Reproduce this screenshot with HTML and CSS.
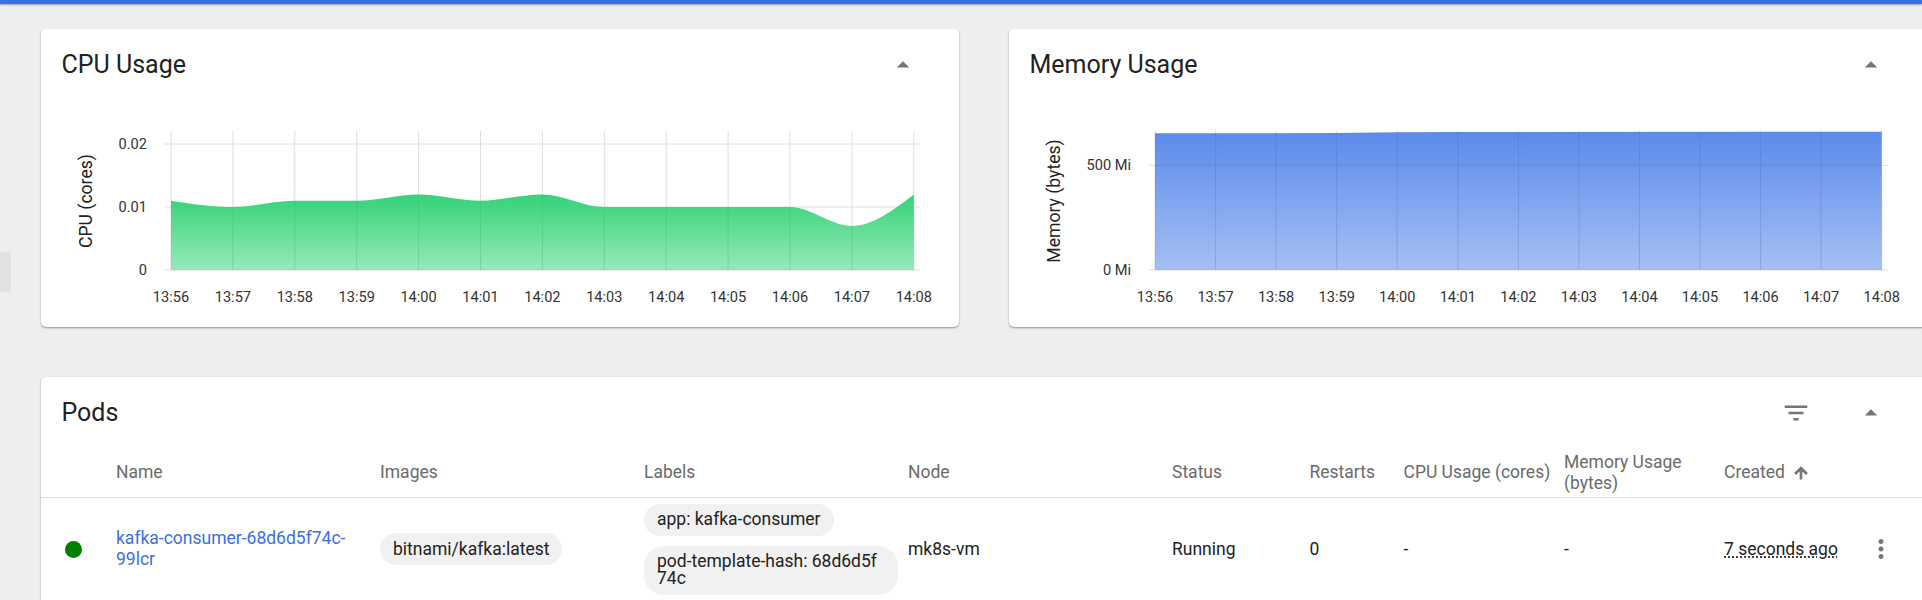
FILE: index.html
```html
<!DOCTYPE html>
<html lang="en">
<head>
<meta charset="utf-8">
<title>Pods</title>
<link rel="stylesheet" href="styles.css">
</head>
<body>
<div class="topbar"></div>
<div class="side-tab"></div>
<main class="content">
  <div class="charts">
    <section class="card">
      <header class="card-head">
        <h2 class="card-title">CPU Usage</h2>
        <svg class="icon" viewBox="0 0 24 24"><path d="M7 14l5-5 5 5z"/></svg>
      </header>
      <svg class="chart" viewBox="41 100 918 227">
        <defs>
          <linearGradient id="gradCpu" x1="0" y1="0" x2="0" y2="1">
            <stop offset="0" stop-color="#30d275" stop-opacity="0.98"/>
            <stop offset="1" stop-color="#30d275" stop-opacity="0.5"/>
          </linearGradient>
        </defs>
        <path class="grid" d="M164.7 144H920M164.7 207H920M164.7 270H920M171 131V270M232.9 131V270M294.8 131V270M356.7 131V270M418.6 131V270M480.5 131V270M542.4 131V270M604.3 131V270M666.2 131V270M728.1 131V270M790 131V270M851.9 131V270M913.8 131V270"/>
        <path fill="url(#gradCpu)" d="M171 270V200.7C191.63 203.85 212.27 207 232.9 207C253.53 207 274.17 200.7 294.8 200.7C315.43 200.7 336.07 200.7 356.7 200.7C377.33 200.7 397.97 194.4 418.6 194.4C439.23 194.4 459.87 200.7 480.5 200.7C501.13 200.7 521.77 194.4 542.4 194.4C563.03 194.4 583.67 207 604.3 207C624.93 207 645.57 207 666.2 207C686.83 207 707.47 207 728.1 207C748.73 207 769.37 207 790 207C810.63 207 831.27 225.9 851.9 225.9C872.53 225.9 893.17 210.15 913.8 194.4V270Z"/>
        <path class="grid-over" d="M232.9 207V270M294.8 200.7V270M356.7 200.7V270M418.6 194.4V270M480.5 200.7V270M542.4 194.4V270M604.3 207V270M666.2 207V270M728.1 207V270M790 207V270M851.9 225.9V270"/>
        <g class="tick tick-end">
          <text x="147" y="149">0.02</text>
          <text x="147" y="212">0.01</text>
          <text x="147" y="275">0</text>
        </g>
        <text class="tick axis-title" transform="translate(92 201) rotate(-90)">CPU (cores)</text>
        <g class="tick tick-mid">
          <text x="171" y="302">13:56</text><text x="232.9" y="302">13:57</text><text x="294.8" y="302">13:58</text><text x="356.7" y="302">13:59</text><text x="418.6" y="302">14:00</text><text x="480.5" y="302">14:01</text><text x="542.4" y="302">14:02</text><text x="604.3" y="302">14:03</text><text x="666.2" y="302">14:04</text><text x="728.1" y="302">14:05</text><text x="790" y="302">14:06</text><text x="851.9" y="302">14:07</text><text x="913.8" y="302">14:08</text>
        </g>
      </svg>
    </section>
    <section class="card">
      <header class="card-head">
        <h2 class="card-title">Memory Usage</h2>
        <svg class="icon" viewBox="0 0 24 24"><path d="M7 14l5-5 5 5z"/></svg>
      </header>
      <svg class="chart" viewBox="1009 100 918 227">
        <defs>
          <linearGradient id="gradMem" x1="0" y1="0" x2="0" y2="1">
            <stop offset="0" stop-color="#3871e6" stop-opacity="0.82"/>
            <stop offset="1" stop-color="#3871e6" stop-opacity="0.45"/>
          </linearGradient>
        </defs>
        <path class="grid" d="M1149.3 165.3H1888M1149.3 270H1888M1155 131V270M1215.6 131V270M1276.1 131V270M1336.7 131V270M1397.2 131V270M1457.8 131V270M1518.4 131V270M1578.9 131V270M1639.5 131V270M1700 131V270M1760.6 131V270M1821.1 131V270M1881.7 131V270"/>
        <path fill="url(#gradMem)" d="M1155 270V133.3L1336.7 133.1L1397.2 132.2L1457.8 132L1881.7 131.7V270Z"/>
        <path class="grid-over" d="M1155 165.3H1881.7M1215.6 133V270M1276.1 133V270M1336.7 133V270M1397.2 132V270M1457.8 132V270M1518.4 132V270M1578.9 132V270M1639.5 132V270M1700 132V270M1760.6 132V270M1821.1 132V270"/>
        <g class="tick tick-end">
          <text x="1131" y="170">500 Mi</text>
          <text x="1131" y="275">0 Mi</text>
        </g>
        <text class="tick axis-title" transform="translate(1060 201) rotate(-90)">Memory (bytes)</text>
        <g class="tick tick-mid">
          <text x="1155" y="302">13:56</text><text x="1215.6" y="302">13:57</text><text x="1276.1" y="302">13:58</text><text x="1336.7" y="302">13:59</text><text x="1397.2" y="302">14:00</text><text x="1457.8" y="302">14:01</text><text x="1518.4" y="302">14:02</text><text x="1578.9" y="302">14:03</text><text x="1639.5" y="302">14:04</text><text x="1700" y="302">14:05</text><text x="1760.6" y="302">14:06</text><text x="1821.1" y="302">14:07</text><text x="1881.7" y="302">14:08</text>
        </g>
      </svg>
    </section>
  </div>

  <section class="card pods">
    <header class="card-head">
      <h2 class="card-title">Pods</h2>
      <div class="head-actions">
        <svg class="icon" viewBox="0 0 24 24"><path d="M10 18h4v-2h-4v2zM3 6v2h18V6H3zm3 7h12v-2H6v2z"/></svg>
        <svg class="icon" viewBox="0 0 24 24"><path d="M7 14l5-5 5 5z"/></svg>
      </div>
    </header>
    <table class="table">
      <colgroup>
        <col class="c-dot"><col class="c-wide"><col class="c-wide"><col class="c-wide"><col class="c-wide"><col class="c-status"><col class="c-restarts"><col class="c-cpu"><col class="c-mem"><col class="c-created"><col class="c-actions">
      </colgroup>
      <thead>
        <tr>
          <th></th><th>Name</th><th>Images</th><th>Labels</th><th>Node</th><th>Status</th><th>Restarts</th><th>CPU Usage (cores)</th><th>Memory Usage (bytes)</th>
          <th><span class="sorted">Created <svg class="sort-icon" viewBox="0 0 24 24"><path d="M4 12l1.41 1.41L11 7.83V20h2V7.83l5.58 5.59L20 12l-8-8-8 8z"/></svg></span></th>
          <th></th>
        </tr>
      </thead>
      <tbody>
        <tr>
          <td><span class="dot"></span></td>
          <td><a class="link" href="#">kafka-consumer-68d6d5f74c-99lcr</a></td>
          <td><span class="chip">bitnami/kafka:latest</span></td>
          <td>
            <div class="chips">
              <span class="chip">app: kafka-consumer</span>
              <span class="chip chip-multi">pod-template-hash: 68d6d5f<br>74c</span>
            </div>
          </td>
          <td>mk8s-vm</td>
          <td>Running</td>
          <td>0</td>
          <td>-</td>
          <td>-</td>
          <td><span class="time">7 seconds ago</span></td>
          <td><svg class="icon more" viewBox="0 0 24 24"><path d="M12 8c1.1 0 2-.9 2-2s-.9-2-2-2-2 .9-2 2 .9 2 2 2zm0 2c-1.1 0-2 .9-2 2s.9 2 2 2 2-.9 2-2-.9-2-2-2zm0 6c-1.1 0-2 .9-2 2s.9 2 2 2 2-.9 2-2-.9-2-2-2z"/></svg></td>
        </tr>
      </tbody>
    </table>
  </section>
</main>
</body>
</html>
```

FILE: styles.css
```css
* { box-sizing: border-box; }

html, body {
  margin: 0;
  height: 600px;
  overflow: hidden;
}

body {
  background: #eceef0;
  font-family: Roboto, "Liberation Sans", sans-serif;
  color: #222;
  position: relative;
}

.topbar {
  height: 4px;
  background: #3871e6;
  box-shadow: 0 1px 2px rgba(0, 0, 0, 0.35);
}

.side-tab {
  position: absolute;
  left: 0;
  top: 252px;
  width: 11px;
  height: 40px;
  background: #e2e2e2;
  border-radius: 0 2px 2px 0;
}

.content {
  padding: 25px 0 0 41px;
  width: 1927px;
}

.charts {
  display: grid;
  grid-template-columns: 918px 918px;
  column-gap: 50px;
  margin-bottom: 50px;
}

.card {
  background: #fff;
  border-radius: 5px;
  box-shadow: 0 1px 2px rgba(0, 0, 0, 0.4);
}

.card-head {
  height: 71px;
  display: flex;
  align-items: center;
  justify-content: space-between;
  padding: 0 41px 0 20.5px;
}

.card-title {
  margin: 0;
  font-size: 25px;
  font-weight: 400;
  color: #222;
}

.icon {
  width: 30px;
  height: 30px;
  fill: #757575;
  display: block;
}

.head-actions {
  display: flex;
  gap: 45px;
}

.chart {
  display: block;
  width: 918px;
  height: 227px;
}

.grid {
  fill: none;
  stroke: #dedede;
  stroke-width: 1;
}

.grid-over {
  fill: none;
  stroke: rgba(20, 40, 90, 0.04);
  stroke-width: 1;
}

.tick {
  font-size: 14.6px;
  fill: #333;
}

.tick-end { text-anchor: end; }
.tick-mid { text-anchor: middle; }

.axis-title {
  font-size: 17.6px;
  fill: #222;
  text-anchor: middle;
}

.pods {
  width: 1886px;
  padding-bottom: 24px;
}

.table {
  width: 1886px;
  table-layout: fixed;
  border-collapse: separate;
  border-spacing: 0;
}

.c-dot { width: 75px; }
.c-wide { width: 264px; }
.c-status { width: 137.5px; }
.c-restarts { width: 94px; }
.c-cpu { width: 160.5px; }
.c-mem { width: 160px; }
.c-created { width: 140px; }
.c-actions { width: 131px; }

.table th {
  height: 50px;
  padding: 0 16px 0 0;
  text-align: left;
  font-size: 17.5px;
  line-height: 20.6px;
  font-weight: 400;
  color: #6b6b6b;
  border-bottom: 1px solid #e0e0e0;
  vertical-align: middle;
}

.table th:nth-child(7),
.table th:nth-child(8),
.table th:nth-child(10) {
  padding-right: 0;
  white-space: nowrap;
}

.table td {
  height: 102px;
  padding: 0 16px 0 0;
  font-size: 17.5px;
  line-height: 21px;
  color: #222;
  vertical-align: middle;
}

.table td:nth-child(10) {
  padding-right: 0;
  white-space: nowrap;
}

.dot {
  display: block;
  width: 17px;
  height: 17px;
  margin-left: 24px;
  border-radius: 50%;
  background: #008000;
}

.link {
  color: #3b6fe6;
  text-decoration: none;
}

.chip {
  display: inline-block;
  padding: 7.5px 13px;
  min-height: 32px;
  border-radius: 16px;
  background: #f1f1f1;
  color: #222;
  font-size: 17.5px;
  line-height: 17px;
  white-space: nowrap;
}

.chips {
  display: flex;
  flex-direction: column;
  align-items: flex-start;
  gap: 10px;
}

.chip-multi {
  width: 253.5px;
  border-radius: 20px;
}

.sorted {
  display: inline-flex;
  align-items: center;
  gap: 7px;
}

.sort-icon {
  width: 18px;
  height: 18px;
  fill: #757575;
  stroke: #757575;
  stroke-width: 1.6;
}

.time {
  text-decoration: underline dotted 2px #444;
  text-underline-offset: 2px;
}

.more {
  margin-left: 2px;
}
```
